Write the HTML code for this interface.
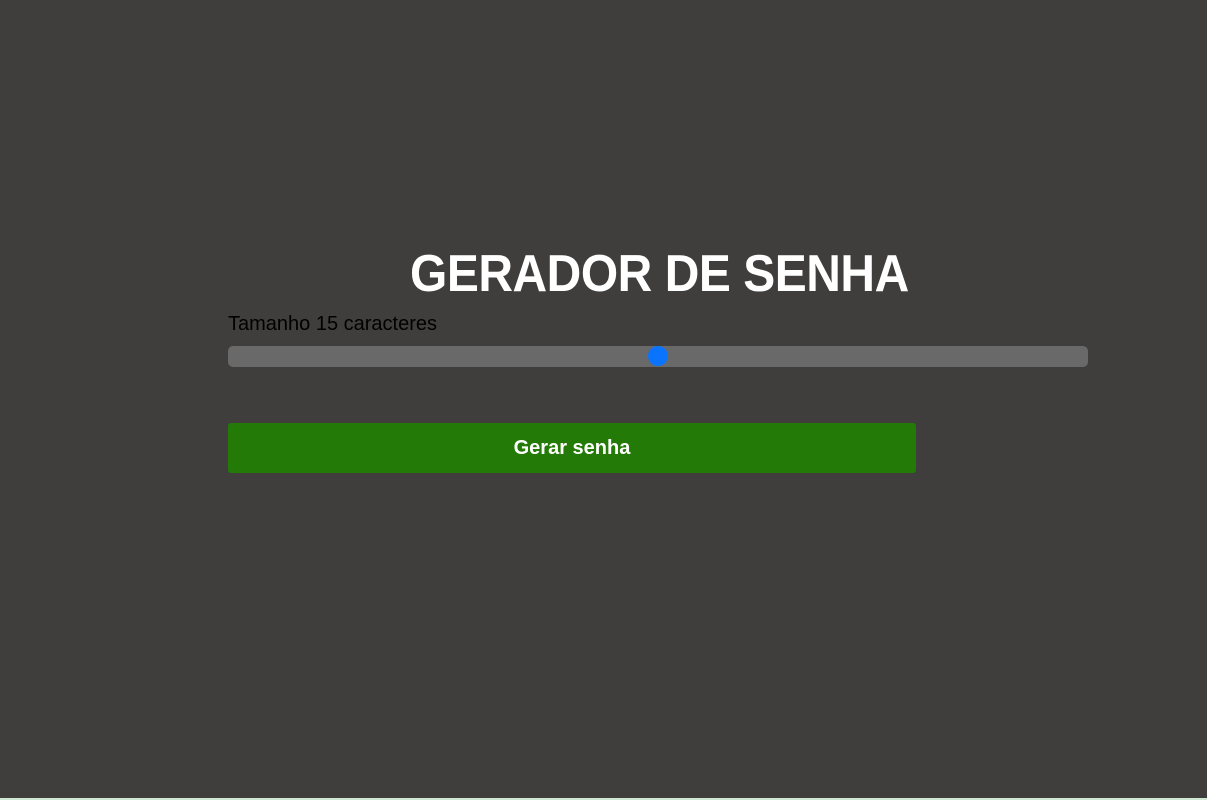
<!DOCTYPE html>
<html><head><meta charset="utf-8"><style>
html,body{margin:0;padding:0}
body{width:1207px;height:800px;background:#403e3d;position:relative;overflow:hidden;font-family:"Liberation Sans",Arial,sans-serif}
.title{position:absolute;left:410px;top:244px;font-weight:bold;font-size:52px;line-height:60px;color:#fff;transform:scaleX(0.922);transform-origin:0 0;letter-spacing:-0.5px;white-space:nowrap}
.label{position:absolute;left:228px;top:313px;font-size:20px;color:#000;line-height:22px}
.track{position:absolute;left:228px;top:346px;width:860px;height:21px;background:#696969;border-radius:5px}
.thumb{position:absolute;left:648px;top:346px;width:20px;height:20px;border-radius:50%;background:#0a74ff}
.btn{position:absolute;left:228px;top:423px;width:688px;height:50px;background:#247a07;border-radius:3px;color:#fff;font-weight:bold;font-size:20px;text-align:center;line-height:50px}
.bottom{position:absolute;left:0;top:798px;width:1207px;height:2px;background:#cfe8d4}
</style></head><body>
<div class="title">GERADOR DE SENHA</div>
<div class="label">Tamanho 15 caracteres</div>
<div class="track"></div>
<div class="thumb"></div>
<div class="btn">Gerar senha</div>
<div class="bottom"></div>
</body></html>
